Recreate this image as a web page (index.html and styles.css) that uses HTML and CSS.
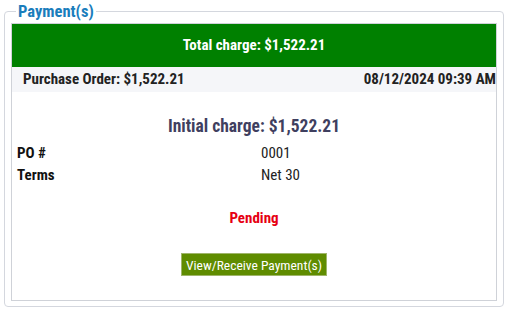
FILE: index.html
```html
<!DOCTYPE html>
<html>
<head>
<meta charset="utf-8">
<link rel="stylesheet" href="styles.css">
</head>
<body>
<fieldset class="payments">
  <legend class="payments-legend">Payment(s)</legend>
  <div class="panel">
    <div class="total">Total charge: $1,522.21</div>
    <div class="po-row">
      <span class="po-title">Purchase Order: $1,522.21</span>
      <span class="po-date">08/12/2024 09:39 AM</span>
    </div>
    <div class="initial">Initial charge: $1,522.21</div>
    <div class="details">
      <div class="label">PO #</div><div class="value">0001</div>
      <div class="label">Terms</div><div class="value">Net 30</div>
    </div>
    <div class="status">Pending</div>
    <div class="actions"><button class="btn">View/Receive Payment(s)</button></div>
  </div>
</fieldset>
</body>
</html>
```
FILE: styles.css
```css
html, body { margin: 0; padding: 0; background: #fff; }
body {
  font-family: "Roboto", "Liberation Sans", sans-serif;
  font-stretch: 81%;
  font-size: 15px;
  color: #222;
  padding: 0 5px 0 4px;
}
.payments {
  margin: 0;
  padding: 0 6px 5px 6px;
  border: 1px solid #d4d7de;
  border-radius: 4px;
  box-sizing: border-box;
  width: 500px;
  height: 304px;
  margin-top: 3px;
}
.payments-legend {
  color: #1a7dbc;
  font-weight: 700;
  font-size: 16.5px;
  padding: 0 2px;
  margin-left: 5px;
  line-height: 17px;
}
.panel {
  border: 1px solid #cfd2d8;
  height: 278px;
  box-sizing: border-box;
  margin-top: 3px;
}
.total {
  background: #008000;
  color: #fff;
  font-weight: 700;
  text-align: center;
  height: 43px;
  line-height: 42px;
  font-size: 15px;
}
.po-row {
  background: #f5f6f9;
  display: flex;
  justify-content: space-between;
  height: 25px;
  line-height: 25px;
  padding: 0 0 0 11px;
  font-weight: 700;
  color: #222;
}
.initial {
  text-align: center;
  font-weight: 700;
  font-size: 17.5px;
  font-stretch: 75%;
  color: #3f3f5f;
  margin-top: 24px;
  line-height: 20px;
}
.details {
  display: grid;
  grid-template-columns: 244px 1fr;
  padding-left: 5px;
  margin-top: 6px;
  line-height: 22px;
  font-size: 15px;
}
.label { font-weight: 700; color: #111; }
.value { color: #222; }
.status {
  text-align: center;
  color: #e60012;
  font-weight: 700;
  font-size: 15px;
  margin-top: 22px;
  line-height: 20px;
}
.actions { text-align: center; margin-top: 25px; }
.btn {
  background: #5f8c00;
  color: #fff;
  border: 1px solid #9fb56a;
  font-family: inherit;
  font-stretch: 81%;
  font-size: 13.5px;
  padding: 0 4px;
  height: 23px;
  line-height: 20px;
}
```
